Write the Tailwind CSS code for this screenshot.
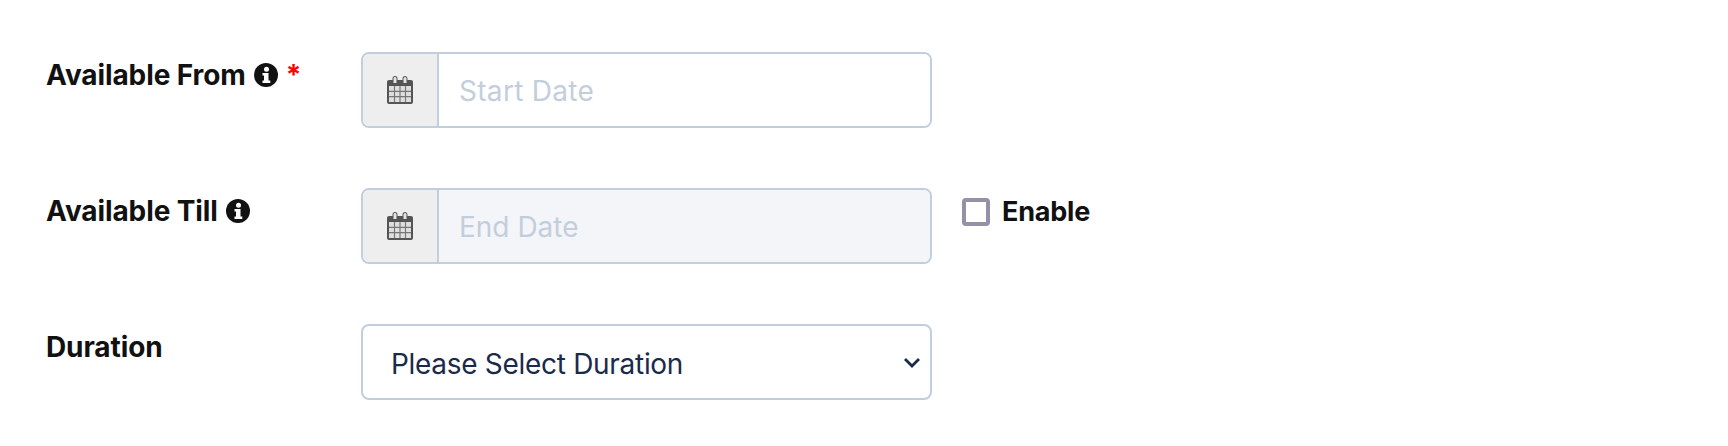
<!DOCTYPE html>
<html lang="en">
<head>
    <meta charset="UTF-8">
    <title>Availability</title>
    <script src="https://cdn.jsdelivr.net/npm/@tailwindcss/browser@4"></script>
</head>
<body class="bg-white font-['Inter',sans-serif] text-[#111111] w-[1728px] h-[446px] overflow-hidden">
    <svg class="hidden">
        <symbol id="cal" viewBox="0 0 26 28">
            <path fill="#555" d="M2 4h3.500V2.500a2.500 2.500 0 0 1 5 0V4h5V2.500a2.500 2.500 0 0 1 5 0V4H24a2 2 0 0 1 2 2v20a2 2 0 0 1-2 2H2a2 2 0 0 1-2-2V6a2 2 0 0 1 2-2z"/>
            <path fill="#e4e4e4" d="M6.500 2.500a1.500 1.500 0 0 1 1-1.400 1.500 1.500 0 0 1 2 1.400V7h-3zM16.500 2.500a1.500 1.500 0 0 1 3 0V7h-3z"/>
            <path fill="#dedede" d="M2 10h22v16H2z"/>
            <path fill="none" stroke="#777" stroke-width="1.200" d="M2 15.300h22M2 20.600h22M7.500 10v16M13 10v16M18.500 10v16"/>
        </symbol>
        <symbol id="info" viewBox="0 0 24 24">
            <circle cx="12" cy="12" r="12" fill="#111"/>
            <circle cx="12.500" cy="6.200" r="2.500" fill="#fff"/>
            <path fill="#fff" d="M8.500 10h6v7.500h1.800V20H8.500v-2.500H10V12.500H8.500z"/>
        </symbol>
    </svg>

    <div class="pl-[46px] pt-[52px] flex flex-col gap-[60px]">
        <!-- Available From -->
        <div class="flex items-start">
            <label class="w-[315px] flex items-center h-[46px] text-[28px] font-bold tracking-[-0.1px]">
                Available From
                <svg class="w-[24px] h-[24px] ml-[8px]"><use href="#info"/></svg>
                <span class="ml-[8px] text-[#ff0000]">*</span>
            </label>
            <div class="flex w-[571px] h-[76px] border-2 border-[#c2cedd] rounded-[8px] overflow-hidden">
                <span class="w-[76px] shrink-0 bg-[#eeeeee] border-r-2 border-[#c2cedd] flex items-center justify-center">
                    <svg class="w-[26px] h-[28px]"><use href="#cal"/></svg>
                </span>
                <input placeholder="Start Date" class="flex-1 min-w-0 pl-[20px] pt-[2px] text-[28px] tracking-[0.3px] bg-white outline-none placeholder:text-[#c3cedd]">
            </div>
        </div>

        <!-- Available Till -->
        <div class="flex items-start">
            <label class="w-[315px] flex items-center h-[46px] text-[28px] font-bold tracking-[-0.1px]">
                Available Till
                <svg class="w-[24px] h-[24px] ml-[8px]"><use href="#info"/></svg>
            </label>
            <div class="flex w-[571px] h-[76px] border-2 border-[#c2cedd] rounded-[8px] overflow-hidden">
                <span class="w-[76px] shrink-0 bg-[#eeeeee] border-r-2 border-[#c2cedd] flex items-center justify-center">
                    <svg class="w-[26px] h-[28px]"><use href="#cal"/></svg>
                </span>
                <input disabled placeholder="End Date" class="flex-1 min-w-0 pl-[20px] pt-[2px] text-[28px] bg-[#f3f5f9] outline-none placeholder:text-[#c3cedd]">
            </div>
            <label class="ml-[30px] h-[46px] mt-[1px] flex items-center text-[27px] tracking-[-0.2px] font-bold">
                <span class="w-[28px] h-[28px] border-4 border-[#9391a5] rounded-[4px] mr-[12px]"></span>
                Enable
            </label>
        </div>

        <!-- Duration -->
        <div class="flex items-start">
            <label class="w-[315px] flex items-center h-[46px] text-[28px] font-bold tracking-[-0.1px]">Duration</label>
            <div class="relative w-[571px] h-[76px] border-2 border-[#c2cedd] rounded-[8px] flex items-center pl-[28px] pt-[3px] text-[28px] tracking-[-0.3px] text-[#1b2a4a]">
                Please Select Duration
                <svg class="absolute right-[10px] top-[32px] w-[16px] h-[10px]" viewBox="0 0 16 10"><path d="M1 1l7 7 7-7" fill="none" stroke="#1b2a4a" stroke-width="2.800"/></svg>
            </div>
        </div>
    </div>
</body>
</html>
